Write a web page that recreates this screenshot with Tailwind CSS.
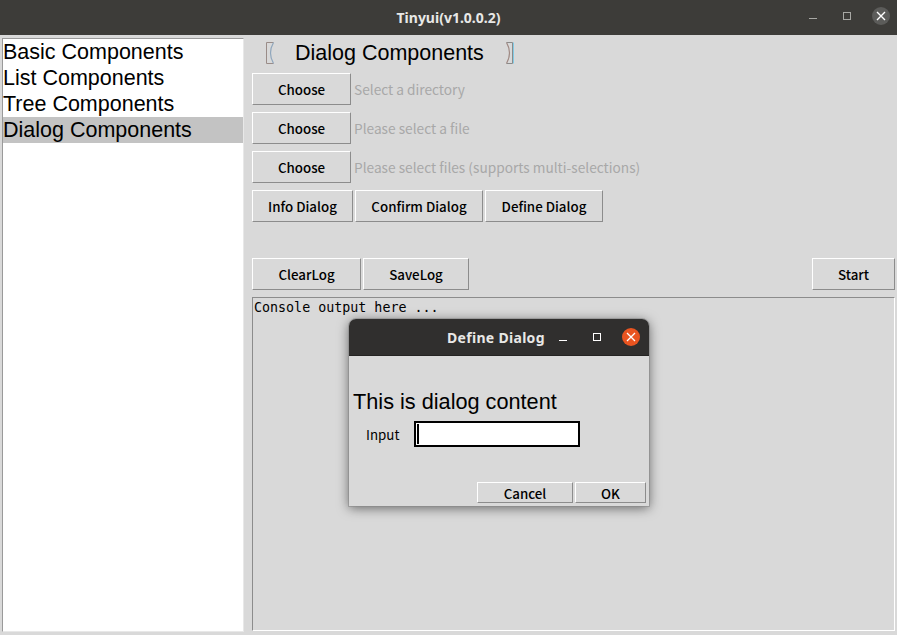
<!DOCTYPE html>
<html lang="en">
<head>
  <meta charset="UTF-8" />
  <title>Tinyui(v1.0.0.2)</title>
  <script src="https://cdn.jsdelivr.net/npm/@tailwindcss/browser@4"></script>
</head>
<body class="relative w-[897px] h-[635px] overflow-hidden bg-[#d9d9d9] font-['Noto_Sans_CJK_SC',sans-serif] text-[13.33px] text-black">

  <!-- main window titlebar -->
  <div class="relative flex h-[35px] items-center justify-center bg-[#3d3c39]">
    <span class="font-['Noto_Sans',sans-serif] text-[14px] font-bold text-[#e8e8e6]">Tinyui(v1.0.0.2)</span>
    <div class="absolute right-[7px] top-[7px] flex items-center gap-[25px]">
      <svg width="9" height="18" viewBox="0 0 9 18"><path d="M0 11.5h8" stroke="#a8a8a4" stroke-width="1"/></svg>
      <svg width="9" height="18" viewBox="0 0 9 18"><rect x="0.5" y="5.5" width="7" height="7" fill="none" stroke="#a8a8a4" stroke-width="1"/></svg>
      <div class="-ml-[5px] flex h-[18px] w-[18px] items-center justify-center rounded-full bg-[#5c5c5a]">
        <svg width="10" height="10" viewBox="0 0 10 10"><path d="M1 1l8 8M9 1l-8 8" stroke="#fff" stroke-width="1.4"/></svg>
      </div>
    </div>
  </div>

  <div class="flex h-[600px] pt-[3px]">
    <!-- side list -->
    <div class="ml-[2px] h-[594px] w-[242px] border border-t-[#9a9a9a] border-l-[#9a9a9a] border-r-[#e8e8e8] border-b-[#e8e8e8] bg-white font-['Liberation_Sans',sans-serif] text-[21.5px]">
      <div class="flex h-[26px] items-center pt-[1px]">Basic Components</div>
      <div class="flex h-[26px] items-center pt-[1px]">List Components</div>
      <div class="flex h-[26px] items-center pt-[1px]">Tree Components</div>
      <div class="flex h-[26px] items-center bg-[#c3c3c3] pt-[1px]">Dialog Components</div>
    </div>

    <!-- right panel -->
    <div class="ml-[8px] flex w-[643px] flex-col">
      <div class="flex h-[30px] items-center pl-[14px] font-['Liberation_Sans',sans-serif] text-[21.5px]">
        <svg width="9" height="23" viewBox="0 0 9 23"><path d="M7.5 0.5H0.5V21.5H7.5" fill="none" stroke="#9a8c88" stroke-width="1"/><path d="M7.5 0.5Q1.5 11 7.5 21.5" fill="none" stroke="#8fa6bc" stroke-width="1.2"/></svg>
        <span class="ml-[20px] w-[211px]">Dialog Components</span>
        <svg width="9" height="23" viewBox="0 0 9 23"><path d="M0.5 0.5H6.5V21.5H0.5" fill="none" stroke="#8a8a8a" stroke-width="1"/><path d="M7.5 0.5V21.5" stroke="#82cbe6" stroke-width="1"/><path d="M0.5 0.5Q6.5 11 0.5 21.5" fill="none" stroke="#a08a84" stroke-width="1.2"/></svg>
      </div>

      <div class="mt-[5px] flex flex-col gap-[7px]">
        <div class="flex items-center gap-[3px]">
          <button class="h-[32px] w-[99px] border border-t-white border-l-white border-r-[#8c8c8c] border-b-[#8c8c8c] pt-[2px] font-medium">Choose</button>
          <span class="text-[13.7px] text-[#a8a8a8]">Select a directory</span>
        </div>
        <div class="flex items-center gap-[3px]">
          <button class="h-[32px] w-[99px] border border-t-white border-l-white border-r-[#8c8c8c] border-b-[#8c8c8c] pt-[2px] font-medium">Choose</button>
          <span class="text-[13.7px] text-[#a8a8a8]">Please select a file</span>
        </div>
        <div class="flex items-center gap-[3px]">
          <button class="h-[32px] w-[99px] border border-t-white border-l-white border-r-[#8c8c8c] border-b-[#8c8c8c] pt-[2px] font-medium">Choose</button>
          <span class="text-[13.7px] text-[#a8a8a8]">Please select files (supports multi-selections)</span>
        </div>
        <div class="flex gap-[2px]">
          <button class="h-[32px] w-[101px] border border-t-white border-l-white border-r-[#8c8c8c] border-b-[#8c8c8c] pt-[2px] font-medium">Info Dialog</button>
          <button class="h-[32px] w-[128px] border border-t-white border-l-white border-r-[#8c8c8c] border-b-[#8c8c8c] pt-[2px] font-medium">Confirm Dialog</button>
          <button class="h-[32px] w-[118px] border border-t-white border-l-white border-r-[#8c8c8c] border-b-[#8c8c8c] pt-[2px] font-medium">Define Dialog</button>
        </div>
      </div>

      <div class="mt-[36px] flex gap-[2px]">
        <button class="h-[32px] w-[109px] border border-t-white border-l-white border-r-[#8c8c8c] border-b-[#8c8c8c] pt-[2px] font-medium">ClearLog</button>
        <button class="h-[32px] w-[106px] border border-t-white border-l-white border-r-[#8c8c8c] border-b-[#8c8c8c] pt-[2px] font-medium">SaveLog</button>
        <button class="ml-auto h-[32px] w-[83px] border border-t-white border-l-white border-r-[#8c8c8c] border-b-[#8c8c8c] pt-[2px] font-medium">Start</button>
      </div>

      <div class="mt-[7px] h-[334px] border border-t-[#8c8c8c] border-l-[#8c8c8c] border-r-white border-b-white pl-[1px] pt-[1px] font-['DejaVu_Sans_Mono',monospace] text-[13.33px] leading-[18px]">Console output here ...</div>
    </div>
  </div>

  <!-- define dialog, floats over the console -->
  <div class="absolute left-[349px] top-[319px] h-[187px] w-[300px] rounded-t-[7px] bg-[#d9d9d9] shadow-[0_2px_12px_rgba(0,0,0,0.55)] outline outline-[#8a8a8a]/60">
    <div class="relative flex h-[37px] items-center rounded-t-[7px] border-b border-[#242322] bg-[#302f2e]">
      <span class="absolute left-[98px] font-['Noto_Sans',sans-serif] text-[14px] font-bold tracking-[0.3px] text-[#e8e8e6]">Define Dialog</span>
      <svg class="absolute left-[210px] top-[13px]" width="9" height="10" viewBox="0 0 9 10"><path d="M0 8.5h8" stroke="#fff" stroke-width="1"/></svg>
      <svg class="absolute left-[244px] top-[13px]" width="9" height="10" viewBox="0 0 9 10"><rect x="0.5" y="1.5" width="7" height="7" fill="none" stroke="#fff" stroke-width="1"/></svg>
      <div class="absolute left-[273px] top-[9px] flex h-[18px] w-[18px] items-center justify-center rounded-full bg-[#e95420]">
        <svg width="10" height="10" viewBox="0 0 10 10"><path d="M1 1l8 8M9 1l-8 8" stroke="#fff" stroke-width="1.3"/></svg>
      </div>
    </div>
    <div class="mt-[33px] pl-[4px] font-['Liberation_Sans',sans-serif] text-[21.7px] leading-[26px]">This is dialog content</div>
    <div class="mt-[6px] flex items-center pl-[17px]">
      <span class="w-[48px] pt-[2px]">Input</span>
      <div class="flex h-[26px] w-[166px] items-center border-2 border-black bg-white pl-[1px]">
        <div class="h-[20px] w-[2px] bg-black"></div>
      </div>
    </div>
    <div class="mt-[35px] flex justify-end gap-[2px] pr-[3px]">
      <button class="h-[21px] w-[96px] border border-t-white border-l-white border-r-[#8c8c8c] border-b-[#8c8c8c] pt-[1px] font-medium">Cancel</button>
      <button class="h-[21px] w-[71px] border border-t-white border-l-white border-r-[#8c8c8c] border-b-[#8c8c8c] pt-[1px] font-medium">OK</button>
    </div>
  </div>
</body>
</html>
